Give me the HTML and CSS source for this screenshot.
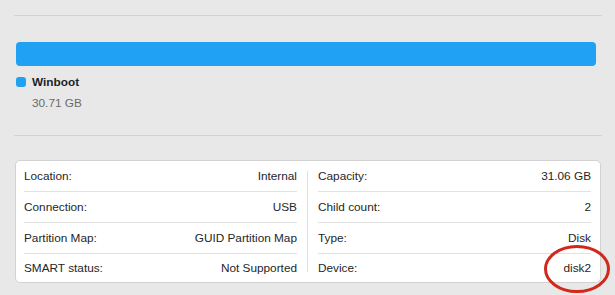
FILE: index.html
```html
<!DOCTYPE html>
<html>
<head>
  <title>Disk Info</title>
  <link rel="stylesheet" href="styles.css">
</head>
<body>
  <div class="page">
    <div class="rule top"></div>

    <div class="usage-bar"></div>

    <div class="legend">
      <span class="swatch"></span>
      <span class="legend-name">Winboot</span>
    </div>
    <div class="legend-size">30.71 GB</div>

    <div class="rule bottom"></div>

    <div class="info">
      <div class="col">
        <div class="row"><span>Location:</span><span>Internal</span></div>
        <div class="row"><span>Connection:</span><span>USB</span></div>
        <div class="row"><span>Partition Map:</span><span>GUID Partition Map</span></div>
        <div class="row"><span>SMART status:</span><span>Not Supported</span></div>
      </div>
      <div class="divider"></div>
      <div class="col">
        <div class="row"><span>Capacity:</span><span>31.06 GB</span></div>
        <div class="row"><span>Child count:</span><span>2</span></div>
        <div class="row"><span>Type:</span><span>Disk</span></div>
        <div class="row"><span>Device:</span><span>disk2</span></div>
      </div>
    </div>
  </div>

  <svg class="mark" width="72" height="54" viewBox="0 0 72 54">
    <ellipse cx="36" cy="27" rx="31.5" ry="22.5" fill="none" stroke="#d2271b" stroke-width="3"/>
  </svg>
</body>
</html>
```

FILE: styles.css
```css
body {
  margin: 0;
  background-color: #e8e8e8;
  font-family: "Liberation Sans", Arial, sans-serif;
  font-size: 11.8px;
  color: #262626;
}
.page {
  padding: 0 13px 0 14px;
}
.rule {
  height: 1px;
  background-color: #d3d3d3;
}
.rule.top {
  margin-top: 15px;
}
.usage-bar {
  height: 24px;
  margin: 26px 6px 0 2px;
  background-color: #21a1f4;
  border-radius: 4px;
}
.legend {
  display: flex;
  align-items: center;
  margin: 10px 0 0 2px;
  height: 12px;
}
.swatch {
  width: 10px;
  height: 10px;
  border-radius: 3px;
  background-color: #21a1f4;
}
.legend-name {
  margin-left: 6px;
  font-weight: bold;
  color: #1e1e1e;
}
.legend-size {
  margin: 8px 0 0 18px;
  color: #6b6b6b;
}
.rule.bottom {
  margin-top: 25px;
}
.info {
  display: flex;
  margin: 24px 1px 0 1px;
  padding: 0 9px 0 8px;
  background-color: #ffffff;
  border: 1px solid #d2d2d2;
  border-radius: 5px;
}
.col {
  flex: 1;
}
.row {
  display: flex;
  justify-content: space-between;
  align-items: center;
  height: 30px;
  border-bottom: 1px solid #e2e2e2;
}
.row:last-child {
  height: 28px;
  border-bottom: none;
}
.divider {
  width: 1px;
  margin: 10px 10px;
  background-color: #e0e0e0;
}
.mark {
  position: absolute;
  left: 541px;
  top: 242px;
}
```
